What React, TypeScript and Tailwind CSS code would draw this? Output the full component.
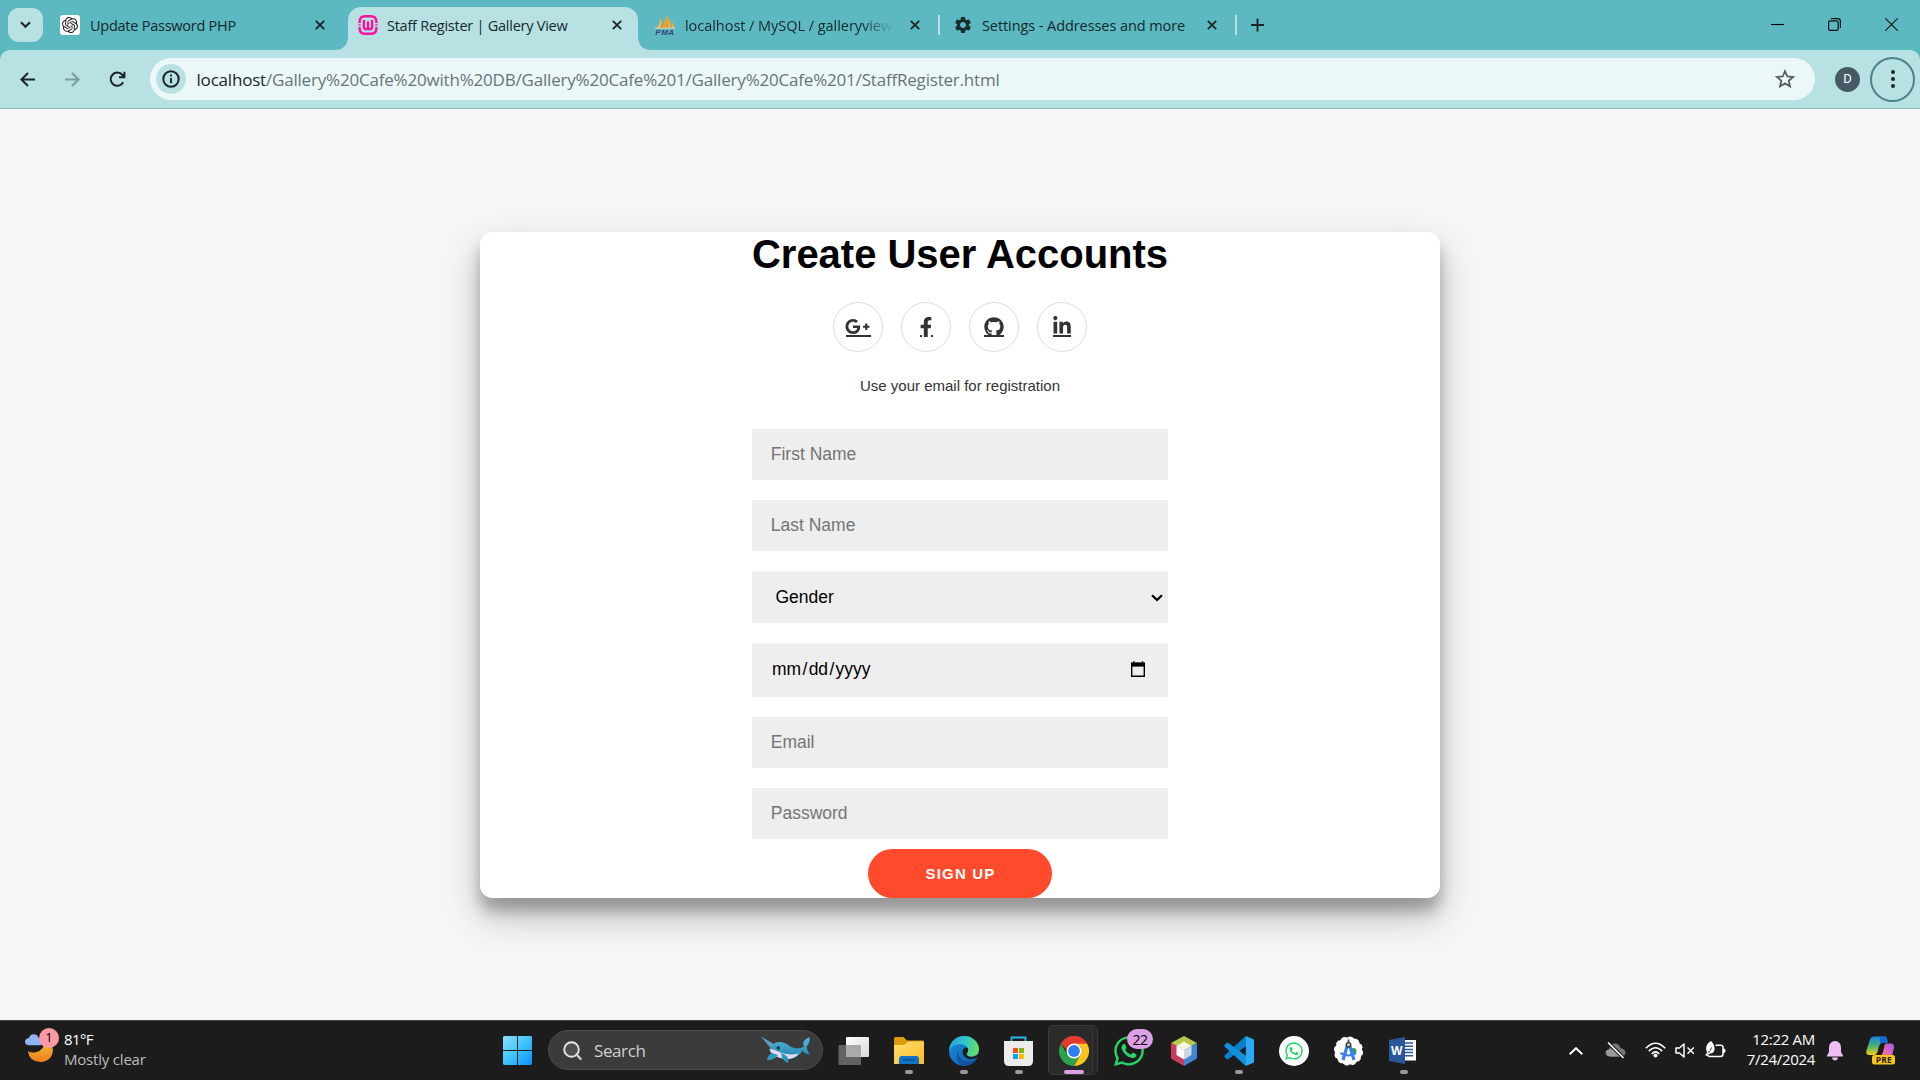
import React from "react";
import { FaFacebookF, FaGithub, FaGooglePlusG, FaLinkedinIn, FaWhatsapp } from "react-icons/fa";
import { SiOpenai } from "react-icons/si";
import { MdSettings } from "react-icons/md";

function CloseX() {
  return (
    <svg width="10" height="10" viewBox="0 0 10 10" className="shrink-0">
      <path d="M0.8 0.8L9.2 9.2M9.2 0.8L0.8 9.2" stroke="#1c2527" strokeWidth="1.8" />
    </svg>
  );
}

function WampIcon() {
  return (
    <svg width="20" height="20" viewBox="0 0 20 20" fill="none" stroke="#ff0f9f" strokeWidth="2.4">
      <path d="M1.6 8V6.2Q2 1.4 6.8 1.3H13.2Q18 1.4 18.4 6.2V8M18.4 12V13.8Q18 18.6 13.2 18.7H6.8Q2 18.6 1.6 13.8V12" />
      <path d="M0.5 10H2.6M17.4 10H19.5" strokeWidth="1.6" />
      <path d="M5.9 5V11.8Q6 14.3 8 14.3Q10 14.3 10 11.8V6.6M10 11.8Q10 14.3 12 14.3Q14.1 14.3 14.1 11.8V5" />
    </svg>
  );
}

function PmaIcon() {
  return (
    <svg width="20" height="20" viewBox="0 0 20 20" className="overflow-visible">
      <path d="M6 3Q7.5 8 5.6 13H1.2Q4.8 9 6 3Z" fill="#fbb24e" />
      <path d="M11.5 0Q9 6 6.8 13H12Z" fill="#f89c1c" />
      <path d="M12.3 1Q16 7 16.2 13H12.6Z" fill="#fba733" />
      <path d="M16 5Q19 9 19.6 13H16.8Q17.2 9 16 5Z" fill="#f6a948" />
      <path d="M0 13.2H20" stroke="#e9dfc8" strokeWidth="0.8" />
      <text x="0.3" y="19.6" fontSize="8" fontWeight="700" fontStyle="italic" fontFamily="Liberation Sans, sans-serif" textLength="18.8" fill="#3b3f77">PMA</text>
    </svg>
  );
}

function TabStrip() {
  return (
    <div className="flex h-[50px] items-start bg-[#5cb8c1] text-[14.5px] text-[#16282b]">
      <div className="mt-2 ml-2 flex h-[34px] w-[35px] items-center justify-center rounded-[11px] bg-[#b8e1e4]">
        <svg width="11" height="8" viewBox="0 0 11 8" fill="none" stroke="#1c2527" strokeWidth="2"><path d="M1 1.3L5.5 5.8L10 1.3" /></svg>
      </div>
      <div className="flex h-[50px] w-[305px] items-center pr-[23px] pl-[17px]">
        <span className="flex h-5 w-5 items-center justify-center rounded-[3px] bg-white"><SiOpenai size={16} color="#222" /></span>
        <span className="ml-[10px] flex-1 pt-[1px] whitespace-nowrap"><span className="tracking-[-0.25px]">Update Password PHP</span></span>
        <CloseX />
      </div>
      <div className="relative mt-[7px] flex h-[43px] w-[290px] items-center rounded-t-[13px] bg-[#b8e1e4] pr-4 pb-[7px] pl-[10px]">
        <svg className="absolute bottom-0 -left-[14px]" width="14" height="14"><path d="M14 0V14H0Q14 14 14 0Z" fill="#b8e1e4" /></svg>
        <svg className="absolute -right-[14px] bottom-0" width="14" height="14"><path d="M0 0V14H14Q0 14 0 0Z" fill="#b8e1e4" /></svg>
        <WampIcon />
        <span className="ml-[9px] flex-1 pt-[1px] whitespace-nowrap"><span className="tracking-[-0.25px]">Staff Register | Gallery View</span></span>
        <CloseX />
      </div>
      <div className="flex h-[50px] w-[300px] items-center pr-[18px] pl-[17px]">
        <PmaIcon />
        <span className="ml-[10px] w-[208px] overflow-hidden pt-[1px] whitespace-nowrap [mask-image:linear-gradient(to_right,black_85%,transparent)]"><span className="tracking-[-0.04px]">localhost / MySQL / galleryview</span></span>
        <span className="flex-1" />
        <CloseX />
      </div>
      <div className="mt-[15px] h-5 w-[2px] bg-[#b8e1e4]" />
      <div className="flex h-[50px] w-[295px] items-center pr-[18px] pl-[13px]">
        <MdSettings size={20} color="#1c2b2e" />
        <span className="ml-[9px] flex-1 pt-[1px] whitespace-nowrap"><span className="tracking-[-0.08px]">Settings - Addresses and more</span></span>
        <CloseX />
      </div>
      <div className="mt-[15px] h-5 w-[2px] bg-[#b8e1e4]" />
      <svg className="mt-[18px] ml-[14px]" width="13" height="14" viewBox="0 0 13 14" stroke="#1c2527" strokeWidth="1.9"><path d="M6.5 0.5V13.5M0 7H13" /></svg>
      <div className="flex-1" />
      <div className="mt-[18px] mr-[22px] flex items-center gap-[44px]">
        <svg width="13" height="13" stroke="#000" strokeWidth="1.1"><path d="M0 6.5H13" /></svg>
        <svg width="13" height="13" fill="none" stroke="#111" strokeWidth="1.2"><rect x="0.6" y="2.8" width="9.6" height="9.6" rx="1.6" /><path d="M3 0.7H9.7Q12.4 0.7 12.4 3.4V10" /></svg>
        <svg width="13" height="13" stroke="#111" strokeWidth="1.1"><path d="M0.3 0.3L12.7 12.7M12.7 0.3L0.3 12.7" /></svg>
      </div>
    </div>
  );
}

function Toolbar() {
  return (
    <div className="h-[59px] bg-[#5cb8c1]">
      <div className="flex h-[59px] items-center rounded-t-[10px] border-b border-[#8db6ba] bg-[#b8e1e4]">
        <svg className="ml-5" width="15" height="15" fill="none" stroke="#1c2527" strokeWidth="2"><path d="M8 1L1.4 7.5L8 14M1.4 7.5H15" /></svg>
        <svg className="ml-[30px]" width="15" height="15" fill="none" stroke="#7d9b9e" strokeWidth="2"><path d="M7 1L13.6 7.5L7 14M13.6 7.5H0" /></svg>
        <svg className="ml-[29px]" width="17" height="17" fill="none" stroke="#1c2527" strokeWidth="2"><path d="M14.2 11.2A6.6 6.6 0 1 1 13.4 4L15.2 6M15.4 0.8V6.2H10" /></svg>
        <div className="ml-[24px] flex h-[42px] w-[1665px] items-center rounded-full bg-[#ecf8f8] pl-[6px]">
          <div className="flex h-[30px] w-[30px] items-center justify-center rounded-full bg-[#b8e1e4]">
            <svg width="18" height="18" fill="none" stroke="#1c2527"><circle cx="9" cy="9" r="7.7" strokeWidth="2" /><path d="M9 8V13.2M9 4.6V6.6" strokeWidth="1.9" /></svg>
          </div>
          <span className="ml-[10.500px] pt-[1px] text-[17px] whitespace-nowrap text-[#66757a]"><span className="tracking-[-0.195px]"><span className="text-[#16282b]">localhost</span>/Gallery%20Cafe%20with%20DB/Gallery%20Cafe%201/Gallery%20Cafe%201/StaffRegister.html</span></span>
          <span className="flex-1" />
          <svg className="mr-5" width="20" height="20" viewBox="0 0 20 20" fill="none" stroke="#565f61" strokeWidth="1.8"><path d="M10 2.2L12.3 7.5L18 8L13.7 11.8L15 17.4L10 14.4L5 17.4L6.3 11.8L2 8L7.700 7.500Z" /></svg>
        </div>
        <div className="ml-[20px] flex h-[25px] w-[25px] items-center justify-center rounded-full bg-[#455a64] font-[Roboto] text-[13px] text-white">D</div>
        <div className="ml-[10px] flex h-[45px] w-[45px] flex-col items-center justify-center gap-[3px] rounded-full border-2 border-[#4a8389]">
          <span className="h-1 w-1 rounded-full bg-[#1c2527]" />
          <span className="h-1 w-1 rounded-full bg-[#1c2527]" />
          <span className="h-1 w-1 rounded-full bg-[#1c2527]" />
        </div>
      </div>
    </div>
  );
}

function Social({ children, line }: { children: React.ReactNode; line: React.ReactNode }) {
  return (
    <a className="relative flex h-[50px] w-[50px] items-center justify-center rounded-full border border-[#ddd] text-[#333]">
      {children}
      <span className="absolute top-[32px] left-0 flex w-full justify-center">{line}</span>
    </a>
  );
}

function Field({ label }: { label: string }) {
  return (
    <input
      placeholder={label}
      className="mb-5 block h-[51px] w-full bg-[#eee] px-[18.75px] text-[17.5px] outline-none placeholder:text-[#757575]"
    />
  );
}

function RegisterCard() {
  return (
    <div className="flex h-[666px] w-[960px] flex-col items-center rounded-[12.5px] bg-white font-['Liberation_Sans',Arial,sans-serif] shadow-[0_17.5px_35px_rgba(0,0,0,0.25),0_12.5px_12.5px_rgba(0,0,0,0.22)]">
      <h1 className="h-[70px] text-[40px] leading-[45px] font-bold tracking-[-0.02px] whitespace-nowrap text-black">Create User Accounts</h1>
      <div className="flex gap-[18px]">
        <Social line={<span className="h-[2px] w-[25px] bg-[#333]" />}><FaGooglePlusG size={25} className="-mt-[2px] -ml-[1px]" /></Social>
        <Social line={<span className="flex w-[13px] justify-between"><i className="h-[2px] w-[2px] bg-[#333]" /><i className="h-[2px] w-[2px] bg-[#333]" /></span>}><FaFacebookF size={20} className="-mt-[1px]" /></Social>
        <Social line={<span className="h-[2px] w-5 bg-[#333]" />}><FaGithub size={20} className="-mt-[1px]" /></Social>
        <Social line={<span className="h-[2px] w-[18px] bg-[#333]" />}><FaLinkedinIn size={20} className="-mt-[3px]" /></Social>
      </div>
      <p className="mt-[25px] h-[52px] text-[15px] leading-[18px] text-[#333]">Use your email for registration</p>
      <div className="w-[416px]">
        <Field label="First Name" />
        <Field label="Last Name" />
        <div className="mb-5 flex h-[52px] items-center justify-between bg-[#eee] pr-[5px] pl-[23.5px] text-[17.5px] text-black">
          <span>Gender</span>
          <svg width="12" height="8" viewBox="0 0 12 8" fill="none" stroke="#000" strokeWidth="2.2" className="mt-[1px]"><path d="M1 1.2L6 6L11 1.2" /></svg>
        </div>
        <div className="mb-5 flex h-[54px] items-center justify-between bg-[#eee] pr-[22px] pl-5 text-[17.5px] text-black">
          <span className="-mt-[1px]">mm<span className="mx-[1.3px]">/</span>dd<span className="mx-[1.3px]">/</span>yyyy</span>
          <svg width="16" height="17" viewBox="0 0 16 17" className="-mt-[1px]"><path d="M1.7 2.5H14.3V15.2H1.7Z" fill="none" stroke="#000" strokeWidth="1.4" /><path d="M1 1.5H15V5.6H1Z" fill="#000" /><path d="M4 0V2M12.5 0V2" stroke="#222" strokeWidth="1.4" /></svg>
        </div>
        <Field label="Email" />
        <Field label="Password" />
      </div>
      <button className="-mt-[10px] h-[49px] w-[184px] shrink-0 rounded-[25px] bg-[#ff4b2b] pt-[1px] pl-[1px] text-[15px] font-bold tracking-[1.2px] text-white">SIGN UP</button>
    </div>
  );
}

function Slot({ children, run }: { children: React.ReactNode; run?: boolean }) {
  return (
    <div className="relative flex h-[59px] w-[55px] items-center justify-center">
      {children}
      {run && <span className="absolute bottom-[6px] left-[23.5px] h-1 w-2 rounded-full bg-[#999]" />}
    </div>
  );
}

function Narwhal() {
  return (
    <svg width="50" height="28" viewBox="0 0 50 28">
      <defs><linearGradient id="nw" x1="0" y1="0" x2="0" y2="1"><stop offset="0" stopColor="#54b7dd" /><stop offset="1" stopColor="#1f83ab" /></linearGradient></defs>
      <path d="M0 0.5L13 8L9.5 12Z" fill="#5d9dbd" />
      <path d="M8.5 14Q11 5.500 19 6Q25 6.500 30 11Q37 14 43 10.500Q39.500 5 48.500 1Q49.500 7 45.500 10.500Q46 15 49 18.500Q43 18 41.500 14.500Q37 23 26 23Q11 22 8.500 14Z" fill="url(#nw)" />
      <path d="M8.5 13Q13 13 18 16Q27 20 38 17.500Q33 23.500 25 23Q10.500 21 8.500 13Z" fill="#e4dcf2" />
      <path d="M11 17L17 19Q14 24 6 24.500Q6 20 11 17ZM20 17Q28 19 27.500 27Q21 25 20 17Z" fill="#2f98be" />
      <circle cx="17.300" cy="12" r="1.700" fill="#163340" />
    </svg>
  );
}

function Taskbar() {
  return (
    <div className="flex h-[60px] border-t border-[#444] bg-[#1c1c1c] text-white">
      <div className="flex w-[503px] items-start">
        <div className="relative mt-[13px] ml-[25px] h-[29px] w-[29px]">
          <svg width="29" height="29" viewBox="0 0 29 29">
            <defs><linearGradient id="mn" x1="0" y1="0" x2="0" y2="1"><stop offset="0" stopColor="#f5c13a" /><stop offset="1" stopColor="#f07f1c" /></linearGradient></defs>
            <path d="M20 5Q20 17 10 18.5Q5 19 3 17Q4 27.500 15.500 28Q27 27.500 28 16Q27 8 20 5Z" fill="url(#mn)" />
            <path d="M4 11.300Q0 11 0 7.500Q0.500 4 4 4Q5 0 9.500 0.300Q13 1 13.500 4Q18 4 18 8Q18 11 15 11.300Z" fill="#8fb4f3" />
          </svg>
          <span className="absolute -top-[6px] left-[14px] flex h-5 w-5 items-center justify-center rounded-full bg-[#ff99a4] text-[13px] text-black">1</span>
        </div>
        <div className="mt-[8px] ml-[10px] text-[15px] leading-5 whitespace-nowrap">
          <div className="tracking-[-0.6px]">81°F</div>
          <div className="text-[#bcbcbc]"><span className="tracking-[-0.2px]">Mostly clear</span></div>
        </div>
      </div>
      <svg className="mt-[15px]" width="29" height="29" viewBox="0 0 29 29">
        <defs><linearGradient id="ws" x1="0" y1="0" x2="1" y2="1"><stop offset="0" stopColor="#8be0ff" /><stop offset="0.5" stopColor="#3fc3fd" /><stop offset="1" stopColor="#0a8ffb" /></linearGradient></defs>
        <path d="M1 0H14V14H0V1ZM15 0H28L29 1V14H15ZM0 15H14V29H1L0 28ZM15 15H29V28L28 29H15Z" fill="url(#ws)" />
      </svg>
      <div className="mt-[9px] ml-4 flex h-10 w-[275px] items-center rounded-full border border-[#4c4c4c] bg-[#3b3b3b]">
        <svg className="ml-[14px]" width="19" height="19" viewBox="0 0 19 19" fill="none"><circle cx="8.500" cy="8.500" r="7.300" fill="#505050" stroke="#e6e6e6" strokeWidth="1.900" /><path d="M13.500 13.500L17.500 17.800" stroke="#d5d5d5" strokeWidth="2.300" strokeLinecap="round" /></svg>
        <span className="ml-3 pt-[1px] text-[17px] text-[#d0d0d0]"><span className="tracking-[-0.4px]">Search</span></span>
        <span className="flex-1" />
        <div className="mr-[11px]"><Narwhal /></div>
      </div>
      <div className="ml-[3px] flex">
        <Slot>
          <svg width="31" height="28" viewBox="0 0 31 28" className="-ml-[1px]">
            <defs><linearGradient id="tv" x1="0" y1="0" x2="1" y2="1"><stop offset="0" stopColor="#fff" /><stop offset="1" stopColor="#d8d8d8" /></linearGradient></defs>
            <rect x="8" y="0" width="23" height="20" rx="1" fill="url(#tv)" />
            <rect x="0.500" y="8" width="22.500" height="20" rx="1" fill="#6a6a6a" fillOpacity="0.900" />
            <path d="M8 8H23V20H8Z" fill="#aaa" />
          </svg>
        </Slot>
        <Slot run>
          <svg className="-mt-[1px]" width="30" height="27" viewBox="0 0 30 27">
            <defs><linearGradient id="fd" x1="0" y1="0" x2="1" y2="1"><stop offset="0" stopColor="#ffdf70" /><stop offset="1" stopColor="#fbbb28" /></linearGradient></defs>
            <path d="M0 1.500Q0 0 1.500 0H9.500L13 3.500H29Q30 3.500 30 5V12H0Z" fill="#dd9a0a" />
            <path d="M0 8H10L14 4.500H29Q30 4.500 30 5.500V27H0Z" fill="url(#fd)" />
            <path d="M5 27V22Q5 19 8 19H22Q25 19 25 22V27Z" fill="#1272c4" />
            <path d="M9 22.800H21" stroke="#0a4f93" strokeWidth="1.500" />
          </svg>
        </Slot>
        <Slot run>
          <svg width="30" height="30" viewBox="0 0 30 30">
            <defs>
              <linearGradient id="e1" x1="0" y1="0.300" x2="1" y2="0.500"><stop offset="0" stopColor="#2aa5e4" /><stop offset="0.550" stopColor="#35c8c8" /><stop offset="1" stopColor="#66e05c" /></linearGradient>
              <linearGradient id="e2" x1="0" y1="0" x2="1" y2="1"><stop offset="0" stopColor="#1b8fe0" /><stop offset="1" stopColor="#0c59a4" /></linearGradient>
            </defs>
            <circle cx="15" cy="15" r="15" fill="url(#e2)" />
            <path d="M0 14C1 5 8 0 15 0C24 0 30 6.500 30 13C30 18 26.500 20.500 22.500 20.500C19 20.500 17.300 19 17.800 17.500C18.500 16 19.500 15 19 12.500C17.500 8.500 12 7.500 7.500 8.500Q2 10.500 0 14Z" fill="url(#e1)" />
            <path d="M9.500 15Q9 25 20.500 26Q25 26 28 22Q24 30 15 30Q5 26 9.500 15Z" fill="#144b94" opacity="0.800" />
            <path d="M17.800 17.500C17 19.500 19 21 22.500 21Q27 21 30.500 17V20.500Q28.500 22 25 22.800Q18 24 15 20Q11.800 15.500 15.500 12Q17.500 11 19 12.500Q19.500 15 17.800 17.500Z" fill="#1c1c1c" />
          </svg>
        </Slot>
        <Slot run>
          <svg width="29" height="30" viewBox="0 0 29 30" className="-ml-[1px]">
            <path d="M7.500 6V1.500H21.500V6" fill="none" stroke="#29b5ef" strokeWidth="1.800" />
            <path d="M0 5H29V25Q29 30 24 30H5Q0 30 0 25Z" fill="#ececec" />
            <path d="M9 12H14V17H9Z" fill="#f25022" /><path d="M15 12H20V17H15Z" fill="#7fba00" /><path d="M9 18H14V23H9Z" fill="#00a4ef" /><path d="M15 18H20V23H15Z" fill="#ffb900" />
          </svg>
        </Slot>
        <Slot>
          <span className="absolute top-[4px] left-[8px] h-[50px] w-[44px] rounded-[5px] border border-[#363636] bg-[#272727]" />
          <span className="absolute top-[4px] left-[2px] h-[50px] w-[45px] rounded-[5px] border border-[#3a3a3a] bg-[#2a2a2a]" />
          <svg className="relative" width="30" height="30" viewBox="0 0 30 30">
            <path d="M15 15L2 7.500A15 15 0 0 1 28 7.500Z" fill="#e33b2e" />
            <path d="M2 7.500A15 15 0 0 0 15 30L21.500 18.800L15 15L8.500 18.800Z" fill="#2da04e" />
            <path d="M28 7.500A15 15 0 0 1 15 30L21.500 18.800V11L15 7.500Z" fill="#fcc31c" />
            <path d="M2 7.500Q7 0 15 0Q23.500 0 28 7.500H15Q9 9 8.500 15Z" fill="#e33b2e" />
            <circle cx="15" cy="15" r="7.500" fill="#fff" /><circle cx="15" cy="15" r="5.900" fill="#2f7df0" />
          </svg>
          <span className="absolute bottom-[6px] left-[17.500px] h-1 w-5 rounded-full bg-[#dd9fe6]" />
        </Slot>
        <Slot>
          <FaWhatsapp size={34} color="#25d366" />
          <span className="absolute top-[8px] left-[26px] flex h-5 w-[26px] items-center justify-center rounded-full bg-[#dd9fe6] text-[14px] tracking-[-0.500px] text-black">22</span>
        </Slot>
        <Slot>
          <svg width="26" height="30" viewBox="0 0 26 30">
            <path d="M13 0L26 7L13 14L0 7Z" fill="#b6c94d" /><path d="M0 7L13 14V30L0 22.500Z" fill="#c93a5c" /><path d="M26 7L13 14V30L26 22.500Z" fill="#3f86d6" />
            <path d="M13 5.500L20.500 10L13 14L5.500 10Z" fill="#f3f5e4" /><path d="M5.500 10L13 14V23.500L5.500 19Z" fill="#fff" /><path d="M20.500 10L13 14V23.500L20.500 19Z" fill="#ccd6e4" />
          </svg>
        </Slot>
        <Slot run>
          <svg width="30" height="30" viewBox="0 0 30 30">
            <path d="M21.500 0.300L1 19Q-0.300 20.300 1 21.500L2.700 23Q3.500 23.600 4.500 23L29 5Z" fill="#0c7fcb" />
            <path d="M21.500 29.700L1 11Q-0.300 9.700 1 8.500L2.700 7Q3.500 6.400 4.500 7L29 25Z" fill="#1390dd" />
            <path d="M21.800 0L30 3.500V26.500L21.800 30Z" fill="#2ba8f3" />
          </svg>
        </Slot>
        <Slot>
          <span className="flex h-[30px] w-[30px] items-center justify-center rounded-full bg-white"><FaWhatsapp size={20} color="#25d366" /></span>
        </Slot>
        <Slot>
          <svg width="29" height="30" viewBox="0 0 29 30" className="-ml-[1px]">
            <circle cx="14.500" cy="15" r="13.800" fill="#fff" stroke="#fff" strokeWidth="1.600" strokeDasharray="4 3.200" />
            <circle cx="19.500" cy="15" r="3" fill="#2f9e57" />
            <path d="M13.500 9L9 24M15.500 9L20 24" stroke="#3d7ff0" strokeWidth="3.200" /><path d="M6.500 17Q14.500 22 22 17" stroke="#3d7ff0" strokeWidth="2.200" fill="none" />
            <circle cx="14.500" cy="8.800" r="2.200" fill="#cfd6dd" stroke="#333" strokeWidth="1.300" /><path d="M14.500 3.500V6" stroke="#333" strokeWidth="1.500" />
          </svg>
        </Slot>
        <Slot run>
          <svg width="27" height="27" viewBox="0 0 27 27" className="-ml-[2px]">
            <path d="M15 3H27V23.500H15Z" fill="#fff" />
            <path d="M16 6H24M16 9.200H24M16 12.400H24M16 15.600H24M16 18.800H24" stroke="#2b579a" strokeWidth="1.500" />
            <path d="M0 3L16 0V27L0 24Z" fill="#2b579a" />
            <text x="2" y="18" fontSize="12.500" fontWeight="700" fontFamily="Liberation Sans, sans-serif" textLength="11.500" lengthAdjust="spacingAndGlyphs" fill="#fff">W</text>
          </svg>
        </Slot>
      </div>
      <div className="flex-1" />
      <div className="flex w-[351px] items-center">
        <svg width="14" height="8" viewBox="0 0 14 8" fill="none" stroke="#fff" strokeWidth="1.900"><path d="M0.700 7.200L7 1.200L13.300 7.200" /></svg>
        <svg className="ml-[22px]" width="21" height="17" viewBox="0 0 21 17">
          <path d="M5 14.500Q0.500 14 0.500 10.500Q1 7.500 4 7.500Q5 2.500 9 1.500Q14 1 15.500 6Q20.500 7 20.500 10.800Q20 14.500 16.500 14.500Z" fill="#777" /><path d="M1 9Q6 5 10 9L17 14.500H5Q0.500 14 1 9Z" fill="#9a9a9a" />
          <path d="M3 0.500L18.500 16" stroke="#1c1c1c" strokeWidth="3.500" /><path d="M3 0.500L18.500 16" stroke="#fff" strokeWidth="1.500" />
        </svg>
        <svg className="-mt-[1px] ml-[19px]" width="21" height="16" viewBox="0 0 21 16" fill="none" stroke="#fff" strokeWidth="1.600"><path d="M0.800 6.200Q10.500 -3.800 20.200 6.200M3.800 9.200Q10.500 2.200 17.200 9.200M6.700 12Q10.500 7.800 14.300 12" /><circle cx="10.500" cy="13.500" r="2" fill="#fff" stroke="none" /></svg>
        <svg className="ml-[9px]" width="20" height="15" viewBox="0 0 20 15" fill="none" stroke="#fff" strokeWidth="1.500"><path d="M1 5H4.500L9 1V14L4.500 10H1Z" strokeLinejoin="round" /><path d="M12.500 4.500L18.800 10.800M18.800 4.500L12.500 10.800" /></svg>
        <svg className="-mt-[3px] ml-[10px]" width="21" height="17" viewBox="0 0 21 17"><path d="M10.500 4.300H15.500Q18 4.300 18 6.500V13Q18 15.500 15.500 15.500H5Q3 15.500 2.500 14" fill="none" stroke="#fff" strokeWidth="1.500" /><path d="M18 7.500H19.200Q20.500 8 20.500 9.800Q20.500 11.500 19.200 12H18Z" fill="#fff" /><path d="M6 0Q10 4 9.500 8.500Q9 12.500 5 12.500L1 15L0.300 14L2 11.500Q-1 4 6 0Z" fill="#fff" /><path d="M2.500 12Q6 10 6.500 6.500" fill="none" stroke="#1c1c1c" strokeWidth="0.900" /></svg>
        <div className="-mt-[3px] w-[89px] text-right text-[15px] leading-5 whitespace-nowrap">
          <div className="tracking-[-0.300px]">12:22 AM</div>
          <div className="tracking-[-0.300px]">7/24/2024</div>
        </div>
        <svg className="mt-[1px] ml-[12px]" width="16" height="20" viewBox="0 0 16 20" fill="#efbcf3"><path d="M8 0Q13.800 0.500 14 6.500V11L16 14.500V15.500H0V14.500L2 11V6.500Q2.200 0.500 8 0ZM5 16.500H11Q10.500 19.500 8 19.500Q5.500 19.500 5 16.500Z" /></svg>
        <svg className="ml-[23px]" width="29" height="29" viewBox="0 0 29 29">
          <defs>
            <linearGradient id="c1" x1="0" y1="0" x2="0" y2="1"><stop offset="0" stopColor="#1687e0" /><stop offset="0.500" stopColor="#4aaf73" /><stop offset="1" stopColor="#efd01a" /></linearGradient>
            <linearGradient id="c2" x1="1" y1="0" x2="0" y2="1"><stop offset="0" stopColor="#9a5df0" /><stop offset="0.600" stopColor="#e966b3" /><stop offset="1" stopColor="#f98a5a" /></linearGradient>
          </defs>
          <path d="M8.500 0.500H19Q21.500 1 21.500 7H15.500Q13 8 12 14Q11 19 8 19H3Q-0.500 19 0.500 14L4 3.500Q5 0.500 8.500 0.500Z" fill="url(#c1)" />
          <path d="M14 0.500H19Q21.500 1 21.500 7H15.500Q14.500 7 14 8Z" fill="#1569d2" />
          <path d="M20 7.500H25.500Q28.500 8 28 11.500L26 20H14.500Q17 18 18 12Q18.500 8 20 7.500Z" fill="url(#c2)" />
          <rect x="6" y="19" width="23" height="9.500" rx="2.500" fill="#fcc419" />
          <text x="9.800" y="26.900" fontSize="8.500" fontWeight="700" fontFamily="Open Sans, sans-serif" textLength="16" fill="#222">PRE</text>
        </svg>
      </div>
    </div>
  );
}

export default function App() {
  return (
    <div className="flex h-[1080px] w-[1920px] flex-col overflow-hidden font-['Open_Sans','Noto_Sans',sans-serif]">
      <TabStrip />
      <Toolbar />
      <main className="flex h-[911px] items-start justify-center overflow-hidden bg-[#f6f5f7] pt-[123px]">
        <RegisterCard />
      </main>
      <Taskbar />
    </div>
  );
}
